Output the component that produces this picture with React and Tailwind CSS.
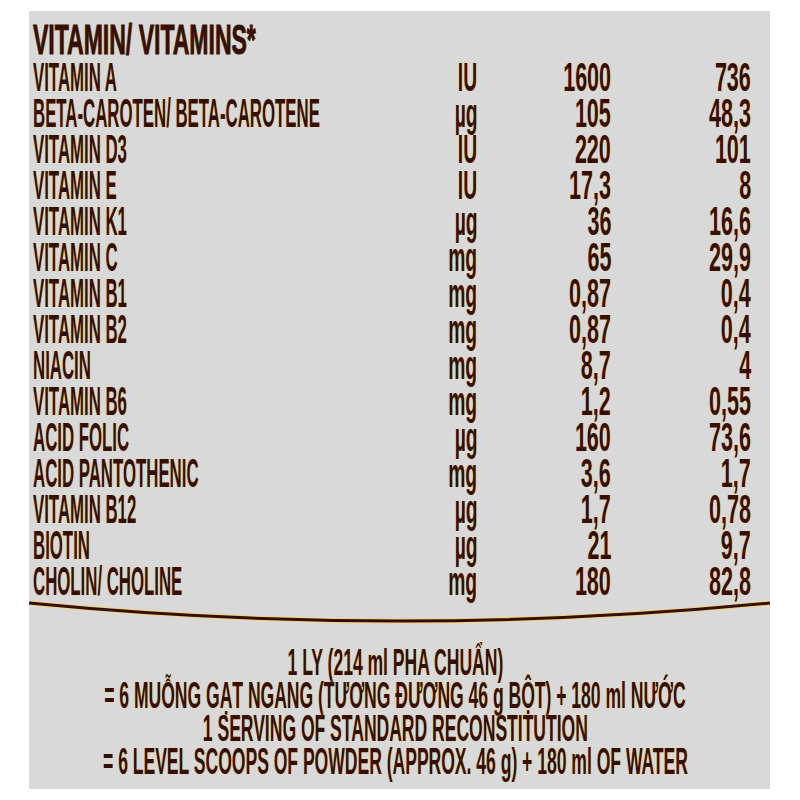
import React from 'react';

const rows = [
  ['VITAMIN A', 'IU', '1600', '736'],
  ['BETA-CAROTEN/ BETA-CAROTENE', 'µg', '105', '48,3'],
  ['VITAMIN D3', 'IU', '220', '101'],
  ['VITAMIN E', 'IU', '17,3', '8'],
  ['VITAMIN K1', 'µg', '36', '16,6'],
  ['VITAMIN C', 'mg', '65', '29,9'],
  ['VITAMIN B1', 'mg', '0,87', '0,4'],
  ['VITAMIN B2', 'mg', '0,87', '0,4'],
  ['NIACIN', 'mg', '8,7', '4'],
  ['VITAMIN B6', 'mg', '1,2', '0,55'],
  ['ACID FOLIC', 'µg', '160', '73,6'],
  ['ACID PANTOTHENIC', 'mg', '3,6', '1,7'],
  ['VITAMIN B12', 'µg', '1,7', '0,78'],
  ['BIOTIN', 'µg', '21', '9,7'],
  ['CHOLIN/ CHOLINE', 'mg', '180', '82,8'],
];

const serving = [
  '1 LY (214 ml PHA CHUẨN)',
  '= 6 MUỖNG GẠT NGANG (TƯƠNG ĐƯƠNG 46 g BỘT) + 180 ml NƯỚC',
  '1 SERVING OF STANDARD RECONSTITUTION',
  '= 6 LEVEL SCOOPS OF POWDER (APPROX. 46 g) + 180 ml OF WATER',
];

// dark brown print with a thin yellowish halo
const ink = "text-[#330f08] font-bold [text-shadow:0_0_1px_#f6df90,0_0_2px_#f1d580]";

const App = () => {
  return (
    <div className="w-[800px] h-[800px] bg-white pt-[11px] pl-[29px] font-['Liberation_Sans',Arial,sans-serif]">
      <div className="w-[741px] h-[778px] bg-[#d9d9d9] overflow-hidden pt-[9px]">
        {/* header */}
        <div className="pl-[4px] h-[39px] leading-[38px] text-[43px] whitespace-nowrap">
          <span className={"inline-block origin-left scale-x-[0.535] [-webkit-text-stroke:1px_#330f08] " + ink}>VITAMIN/ VITAMINS*</span>
        </div>

        {/* table */}
        <div className="pl-[4px]">
          {rows.map((r) => (
            <div key={r[0]} className="grid grid-cols-[384px_60px_134px_140px] h-[36px] leading-[36px] text-[40px] whitespace-nowrap">
              <div><span className={"inline-block origin-left scale-x-[0.42] " + ink}>{r[0]}</span></div>
              <div className="text-right"><span className={"inline-block origin-right scale-x-[0.48] " + ink}>{r[1]}</span></div>
              <div className="text-right"><span className={"inline-block origin-right scale-x-[0.537] " + ink}>{r[2]}</span></div>
              <div className="text-right"><span className={"inline-block origin-right scale-x-[0.537] " + ink}>{r[3]}</span></div>
            </div>
          ))}
        </div>

        {/* curved rule */}
        <svg width="741" height="30" viewBox="0 0 741 30" className="block">
          <path d="M0 4 Q370 40 741 4" fill="none" stroke="#f0d37c" strokeWidth="5" />
          <path d="M0 4 Q370 40 741 4" fill="none" stroke="#330f08" strokeWidth="3" />
        </svg>

        {/* serving info */}
        <div className="mt-[17px] pr-[9px]">
          {serving.map((s) => (
            <div key={s} className="flex justify-center h-[33px] leading-[33px] text-[36px] whitespace-nowrap">
              <span className={"shrink-0 inline-block scale-x-[0.487] " + ink}>{s}</span>
            </div>
          ))}
        </div>
      </div>
    </div>
  );
};

export default App;
